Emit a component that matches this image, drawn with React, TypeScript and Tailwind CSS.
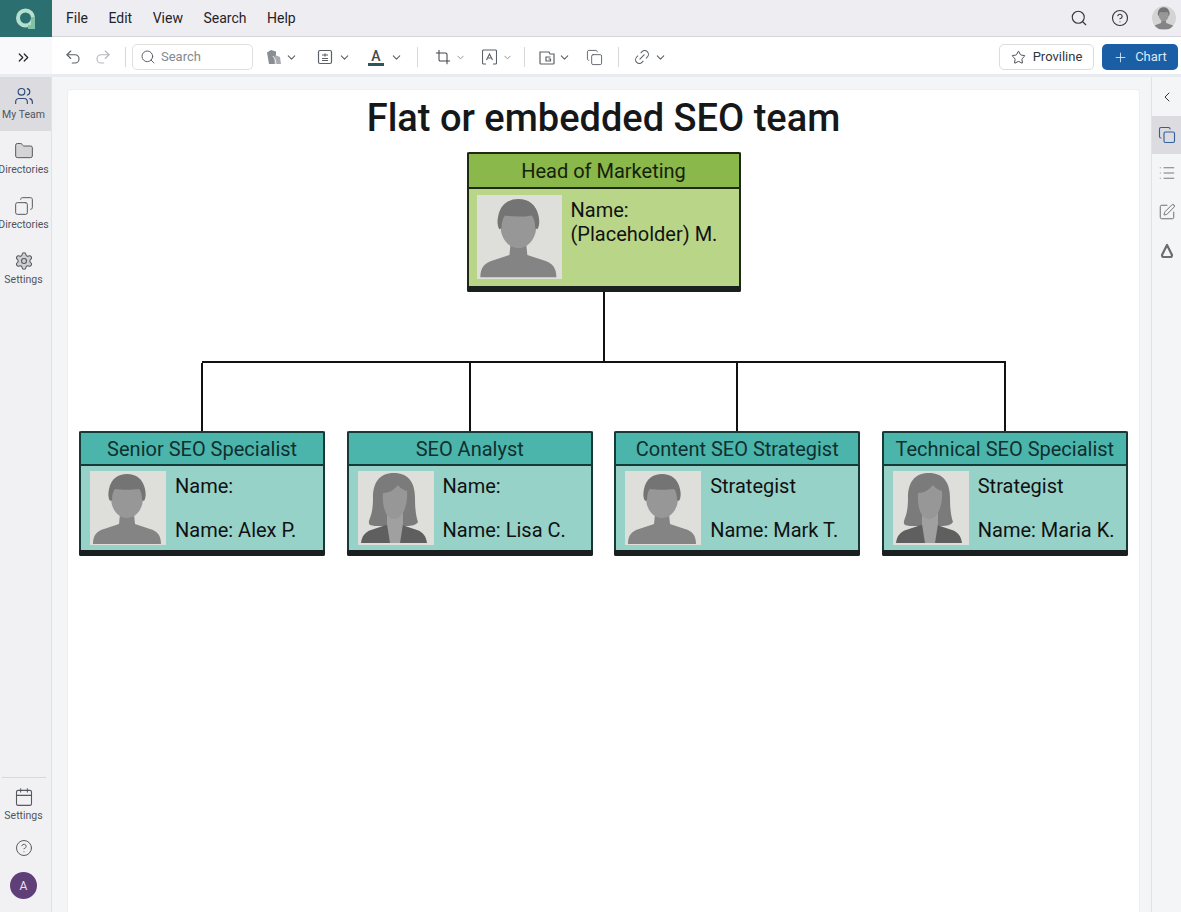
import React from 'react'
import { Undo2, Redo2, Search, ChevronDown, ChevronLeft, ChevronsRight, Crop, Copy, Link2, Star, Plus, CircleHelp, Users, Folder, Settings, Calendar, List, SquarePen } from 'lucide-react'

interface personProps {
    female?: boolean
}

const Person = (props: personProps) => {
    if (props.female) {
        return (
            <svg viewBox="0 0 76 74" className="w-full h-full">
                <path d="M36 2C21 2 15 12 15 27c0 9-1 15-3 20-1 3-2 5 0 7 3 1 6 1 10 1h26c6 0 10-1 12-4-2-6-3-13-3-24C57 11 50 2 36 2z" fill="#7b7b7b" />
                <path d="M3 72c1-7 4-11 10-13l15-5 8 3 8-3 15 5c6 2 9 6 10 13z" fill="#5f5f5f" />
                <path d="M29 40h16v13l-3 19H32l-3-19z" fill="#a0a0a0" />
                <path d="M25 22c6 0 11-3 15-8 2 3 5 5 9 6 1 14-4 28-13 28-8 0-12-12-11-26z" fill="#979797" />
            </svg>
        )
    }
    return (
        <svg viewBox="0 0 76 74" className="w-full h-full">
            <path d="M3 73c0-9 4-13 11-15l15-5 1-10h14l1 10 15 5c7 2 11 6 11 15z" fill="#848484" />
            <path d="M37 47c-9 0-16-9-16-20V18h32v9c0 11-7 20-16 20z" fill="#979797" />
            <path d="M20 30c-2-3-2-8-1-12C21 8 28 3 37 3s16 5 18 15c1 4 1 9-1 12l-2-1c0-5-1-9-3-11-7 1-17 1-24 0-2 2-3 6-3 11z" fill="#747474" />
        </svg>
    )
}

interface toolProps {
    width: string
    children: React.ReactNode
}

const Tool = (props: toolProps) => {
    return <div className={`flex items-center justify-between shrink-0 ${props.width}`}>{props.children}</div>
}

const Sep = () => <div className="w-px h-[20px] bg-[#d8d8dc] shrink-0" />

interface navProps {
    icon: React.ReactNode
    label: string
    className: string
}

const NavItem = (props: navProps) => {
    return (
        <div className={`flex flex-col items-center ${props.className}`}>
            {props.icon}
            <span className="text-[10.5px] leading-[14px] text-[#50545c] mt-[2px] whitespace-nowrap">{props.label}</span>
        </div>
    )
}

interface cardProps {
    title: string
    line1: string
    line2: string
    female?: boolean
}

const Card = (props: cardProps) => {
    return (
        <div className="h-[125px] border-2 border-b-0 border-[#173a38] rounded-[2px] bg-[#97d2c9] flex flex-col">
            <div className="h-[33px] shrink-0 bg-[#4bb5ac] border-b-2 border-[#173a38] pt-[1px] flex items-center justify-center text-[20px] text-[#10302e]">{props.title}</div>
            <div className="flex-1 min-h-0 flex pl-[9px] pt-[5px]">
                <div className="w-[76px] h-[74px] bg-[#dededa] shrink-0"><Person female={props.female} /></div>
                <div className="ml-[9px] h-[74px] py-[3px] flex flex-col justify-between text-[20px] leading-[24px] text-[#111]">
                    <div>{props.line1}</div>
                    <div>{props.line2}</div>
                </div>
            </div>
            <div className="h-[6px] -mx-[2px] bg-[#1a1f1f] rounded-b-[2px] shrink-0" />
        </div>
    )
}

const App = () => {
    const team = [
        { title: 'Senior SEO Specialist', line1: 'Name:', line2: 'Name: Alex P.' },
        { title: 'SEO Analyst', line1: 'Name:', line2: 'Name: Lisa C.', female: true },
        { title: 'Content SEO Strategist', line1: 'Strategist', line2: 'Name: Mark T.' },
        { title: 'Technical SEO Specialist', line1: 'Strategist', line2: 'Name: Maria K.', female: true },
    ]

    return (
        <div className="h-[912px] w-[1181px] overflow-hidden flex flex-col bg-[#f4f5f7] font-['Roboto',sans-serif]">
            {/* menu bar */}
            <div className="h-[37px] shrink-0 flex items-center bg-[#eeeef2] border-b border-[#d6d6da]">
                <div className="w-[52px] h-[37px] bg-[#2b6f70] flex items-center justify-center shrink-0">
                    <svg width="24" height="24" viewBox="0 0 24 24" fill="none">
                        <circle cx="11.5" cy="12" r="7.5" stroke="#b5e0cf" strokeWidth="4" />
                        <path d="M19 11v10h-5" stroke="#7fc2a8" strokeWidth="4" />
                    </svg>
                </div>
                <div className="flex ml-[14px] gap-[20.5px] text-[14px] text-[#1f2328]">
                    <span>File</span>
                    <span>Edit</span>
                    <span>View</span>
                    <span>Search</span>
                    <span>Help</span>
                </div>
                <div className="ml-auto flex items-center gap-[23px] pr-[5px] text-[#33363b]">
                    <Search size={18} strokeWidth={1.5} />
                    <CircleHelp size={18} strokeWidth={1.5} />
                    <div className="w-[24px] h-[24px] rounded-full bg-[#d4d4d4] overflow-hidden"><Person /></div>
                </div>
            </div>

            {/* toolbar */}
            <div className="h-[40px] shrink-0 flex items-center bg-white border-b-[3px] border-[#e8ebef] text-[#5c6067]">
                <div className="w-[52px] h-full pt-[3px] pr-[5px] flex items-center justify-center bg-[#f9f9fb] text-[#22252a] shrink-0">
                    <ChevronsRight size={17} strokeWidth={1.7} />
                </div>
                <div className="flex items-center ml-[12px] mt-[3px]">
                    <Undo2 size={18} strokeWidth={1.5} />
                    <Redo2 size={18} strokeWidth={1.5} className="ml-[12px] text-[#b4b7bc]" />
                    <div className="ml-[13px]"><Sep /></div>
                    <div className="ml-[6px] w-[121px] h-[26px] rounded-[5px] border border-[#e0e0dc] flex items-center pl-[7px] text-[13px] text-[#85888d]">
                        <Search size={16} strokeWidth={1.5} className="text-[#5c6067]" />
                        <span className="ml-[5px]">Search</span>
                    </div>
                    <div className="ml-[13px]">
                        <Tool width="w-[32px]">
                            <svg width="16" height="16" viewBox="0 0 16 16">
                                <path d="M1 3.5 5 1l5 1.5V15H3z" fill="#8a8d92" />
                                <path d="M9 6l5 2 1 7H8z" fill="#a9abb0" />
                                <path d="M7 7l2 3 1 5" fill="none" stroke="#f1f1f1" strokeWidth="1" />
                            </svg>
                            <ChevronDown size={13} />
                        </Tool>
                    </div>
                    <div className="ml-[19px]">
                        <Tool width="w-[34px]">
                            <svg width="16" height="16" viewBox="0 0 16 16" fill="none" stroke="currentColor" strokeWidth="1.2">
                                <rect x="1.5" y="1.5" width="13" height="13" rx="1.5" />
                                <path d="M5 6h6M8 4.5v3M5 9.5h6M5 11.5h6" />
                            </svg>
                            <ChevronDown size={13} />
                        </Tool>
                    </div>
                    <div className="ml-[17px]">
                        <Tool width="w-[35px]">
                            <div className="flex flex-col items-center w-[16px] text-[14px] leading-[14px] font-medium text-[#44474c]">
                                A
                                <div className="w-[16px] h-[3px] bg-[#2b5563]" />
                            </div>
                            <ChevronDown size={13} />
                        </Tool>
                    </div>
                    <div className="ml-[14px]"><Sep /></div>
                    <div className="ml-[17px]">
                        <Tool width="w-[31px]">
                            <Crop size={16} strokeWidth={1.6} className="text-[#44474c]" />
                            <ChevronDown size={11} className="text-[#8a8d92]" />
                        </Tool>
                    </div>
                    <div className="ml-[16px]">
                        <Tool width="w-[31px]">
                            <svg width="15" height="16" viewBox="0 0 15 16" fill="none" stroke="currentColor" strokeWidth="1.1">
                                <path d="M4 1H1.5a1 1 0 0 0-1 1v12a1 1 0 0 0 1 1H4M11 1h2.5a1 1 0 0 1 1 1v12a1 1 0 0 1-1 1H11M1 1h13" />
                                <path d="M4.5 11l3-6 3 6M5.5 9h4" />
                            </svg>
                            <ChevronDown size={11} className="text-[#8a8d92]" />
                        </Tool>
                    </div>
                    <div className="ml-[11px]"><Sep /></div>
                    <div className="ml-[14px]">
                        <Tool width="w-[32px]">
                            <svg width="16" height="16" viewBox="0 0 16 16" fill="none" stroke="currentColor" strokeWidth="1.2">
                                <path d="M1 3h9l1 2h4v9a1 1 0 0 1-1 1H2a1 1 0 0 1-1-1z" />
                                <path d="M11.5 8H7v4h4.5v-2H9.5" />
                            </svg>
                            <ChevronDown size={13} />
                        </Tool>
                    </div>
                    <div className="ml-[15px]"><Copy size={17} strokeWidth={1.3} /></div>
                    <div className="ml-[15px]"><Sep /></div>
                    <div className="ml-[14px]">
                        <Tool width="w-[34px]">
                            <Link2 size={18} strokeWidth={1.4} className="-rotate-45" />
                            <ChevronDown size={13} />
                        </Tool>
                    </div>
                </div>
                <div className="ml-auto mt-[3px] flex items-center gap-[8px] pr-[3px]">
                    <div className="w-[95px] h-[26px] rounded-[5px] border border-[#dcdcda] flex items-center justify-center gap-[7px] text-[13px] text-[#33363b]">
                        <Star size={15} strokeWidth={1.4} />
                        Proviline
                    </div>
                    <div className="w-[76px] h-[26px] rounded-[5px] bg-[#1a5ea6] flex items-center justify-center gap-[7px] text-[13px] text-[#dbe8f5]">
                        <Plus size={15} strokeWidth={1.4} />
                        Chart
                    </div>
                </div>
            </div>

            <div className="flex-1 flex min-h-0">
                {/* left nav */}
                <div className="w-[52px] shrink-0 flex flex-col bg-[#f1f1f4] border-r border-[#e2e2e6]">
                    <NavItem className="h-[54px] pt-[9px] pr-[4px] bg-[#dcdce0]" label="My Team" icon={<Users size={20} strokeWidth={1.4} className="text-[#2c4a78]" />} />
                    <NavItem className="mt-[10px] pr-[4px]" label="Directories" icon={<Folder size={20} strokeWidth={1.2} fill="#d4d4d6" className="text-[#55585e]" />} />
                    <NavItem className="mt-[19px] pr-[4px]" label="Directories" icon={<Copy size={20} strokeWidth={1.2} className="text-[#55585e] -scale-x-100" />} />
                    <NavItem className="mt-[19px] pr-[4px]" label="Settings" icon={<Settings size={20} strokeWidth={1.3} fill="#cfcfd2" className="text-[#55585e]" />} />
                    <div className="mt-auto flex flex-col items-center pb-[13px] pr-[4px]">
                        <div className="w-[44px] h-px bg-[#d8d8dc] mb-[9px]" />
                        <NavItem className="" label="Settings" icon={<Calendar size={20} strokeWidth={1.3} className="text-[#55585e]" />} />
                        <CircleHelp size={18} strokeWidth={1.3} className="mt-[16px] text-[#55585e]" />
                        <div className="mt-[15px] w-[27px] h-[27px] rounded-full bg-[#5e3f78] flex items-center justify-center text-[12px] text-[#e8e0ee]">A</div>
                    </div>
                </div>

                {/* canvas */}
                <div className="flex-1 min-w-0 pl-[15px] pr-[11px] pt-[12px]">
                    <div className="h-[900px] bg-white rounded-t-[3px] border border-[#eceef0] px-[11px] pt-[8px] flex flex-col items-center">
                        <h1 className="text-[38px] leading-[40px] font-medium text-[#151719]">Flat or embedded SEO team</h1>
                        <div className="mt-[14px] w-[274px] h-[140px] shrink-0 border-2 border-b-0 border-[#1e2a14] rounded-[2px] bg-[#b9d587] flex flex-col">
                            <div className="h-[35px] shrink-0 bg-[#8ab84a] border-b-2 border-[#1e2a14] pt-[1px] flex items-center justify-center text-[20px] text-[#15220a]">Head of Marketing</div>
                            <div className="flex-1 min-h-0 flex pl-[8px] pt-[6px]">
                                <div className="w-[85px] h-[84px] bg-[#dededa] shrink-0"><Person /></div>
                                <div className="ml-[9px] pt-[3px] text-[20px] leading-[24px] text-[#111]">
                                    <div>Name:</div>
                                    <div>(Placeholder) M.</div>
                                </div>
                            </div>
                            <div className="h-[6px] -mx-[2px] bg-[#1a1f1f] rounded-b-[2px] shrink-0" />
                        </div>
                        <div className="w-[2px] h-[69px] bg-[#111] shrink-0" />
                        <div className="w-[804px] h-[2px] bg-[#111] shrink-0" />
                        <div className="w-full grid grid-cols-4 gap-x-[21.33px]">
                            {team.map((item) => (
                                <div key={item.title} className="flex flex-col items-center">
                                    <div className="w-[2px] h-[68px] bg-[#111]" />
                                    <div className="w-full"><Card {...item} /></div>
                                </div>
                            ))}
                        </div>
                    </div>
                </div>

                {/* right rail */}
                <div className="w-[30px] shrink-0 flex flex-col items-center bg-[#f4f5f7] border-l border-[#e2e2e6] text-[#6a6d72]">
                    <ChevronLeft size={16} strokeWidth={1.5} className="mt-[12px] text-[#33363b]" />
                    <div className="mt-[11px] w-full h-[38px] bg-[#dcdce0] flex items-center justify-center">
                        <Copy size={18} strokeWidth={1.5} className="text-[#2f5f9c]" />
                    </div>
                    <List size={18} strokeWidth={1.2} className="mt-[10px]" />
                    <SquarePen size={18} strokeWidth={1.3} className="mt-[21px]" />
                    <svg width="14" height="16" viewBox="0 0 14 16" className="mt-[22px]" fill="none" stroke="currentColor" strokeWidth="2.2">
                        <path d="M7 2L2 12c0 1 .5 2 1.5 2h7c1 0 1.5-1 1.5-2z" strokeLinejoin="round" />
                    </svg>
                </div>
            </div>
        </div>
    )
}

export default App
